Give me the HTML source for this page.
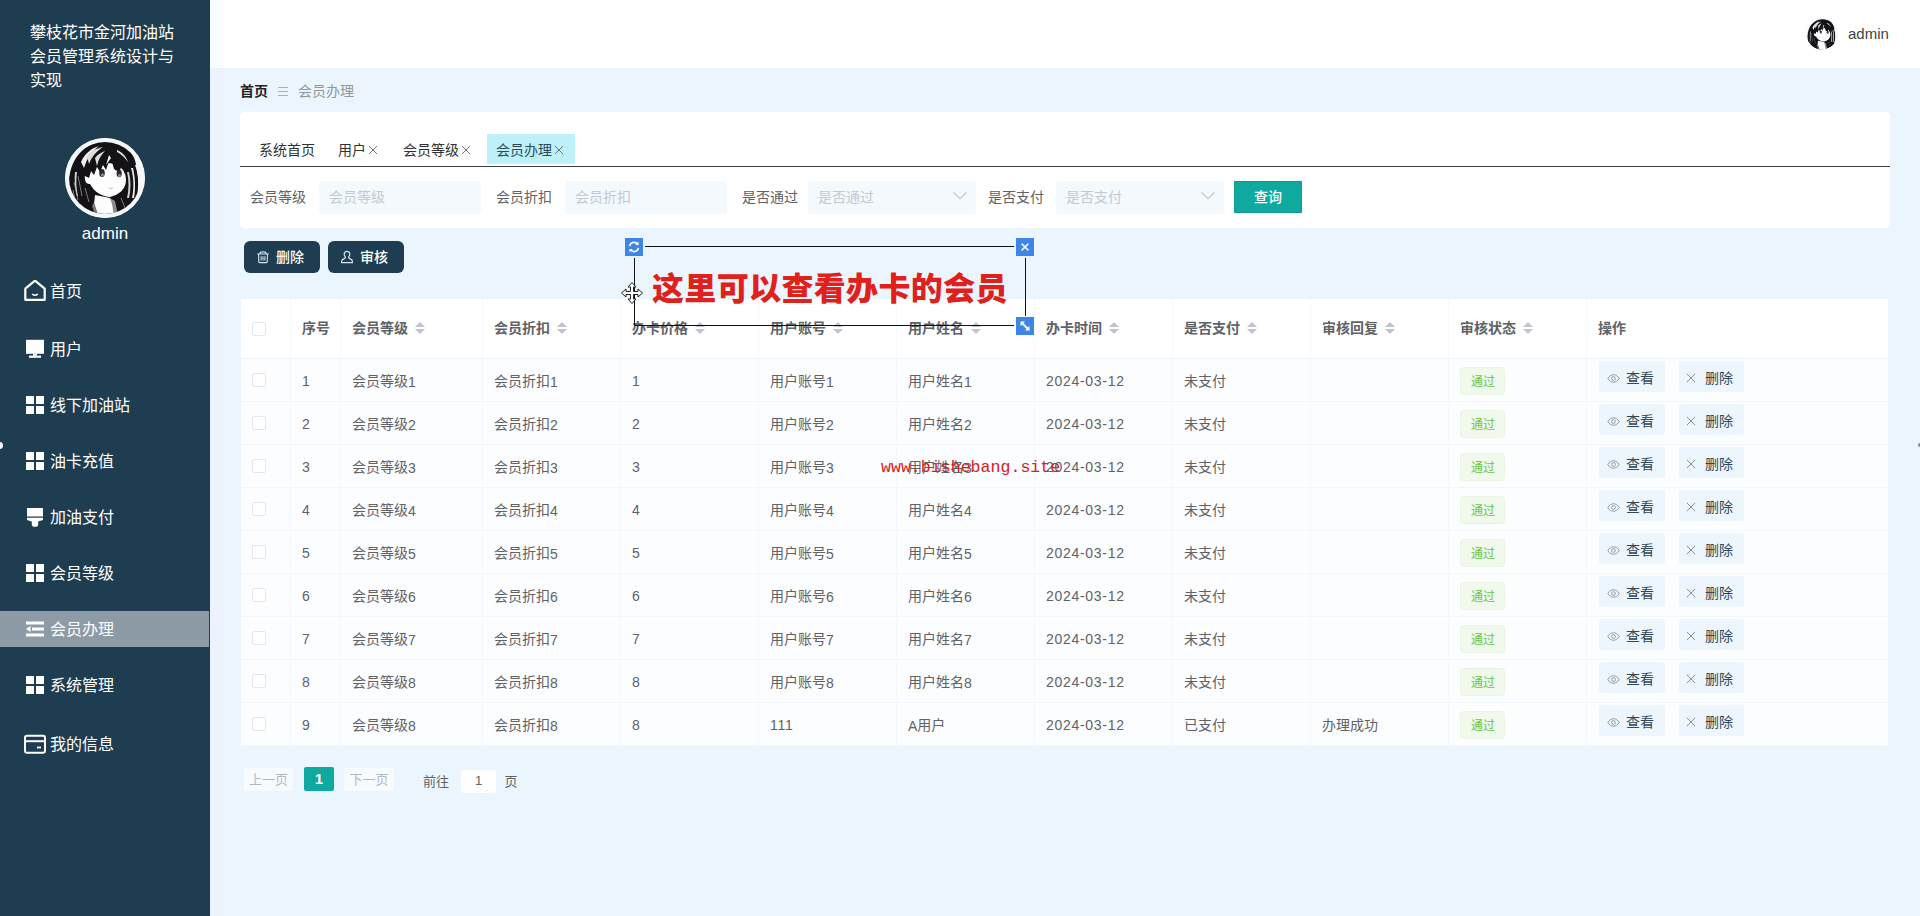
<!DOCTYPE html>
<html lang="zh-CN">
<head>
<meta charset="utf-8">
<title>攀枝花市金河加油站会员管理系统设计与实现</title>
<style>
*{box-sizing:border-box;margin:0;padding:0}
html,body{width:1920px;height:916px;overflow:hidden}
body{position:relative;background:#ebf5fe;font-family:"Liberation Sans","Noto Sans CJK SC",sans-serif;font-size:14px;color:#606266}
i{font-style:normal}
b{font-weight:normal}
.abs{position:absolute}

/* ---------- sidebar ---------- */
#side{position:absolute;left:0;top:0;width:210px;height:916px;background:#1f3d50;color:#fff}
#side h1{position:absolute;left:30px;top:21px;width:150px;font-size:16px;font-weight:normal;line-height:24px;color:#fff}
#side .avatar{position:absolute;left:65px;top:138px;width:80px;height:80px;border-radius:50%;background:#fff;overflow:hidden}
#side .uname{position:absolute;left:0;top:222px;width:210px;text-align:center;font-size:17px;line-height:24px;color:#fff}
#side .mi{position:absolute;left:0;width:209px;height:36px;line-height:38px;font-size:16px;color:#fff;padding-left:50px;white-space:nowrap}
#side .mi.on{background:#8d9ba6}
#side .mi svg{position:absolute;left:24px;top:7px;width:22px;height:22px}

#strip{position:absolute;left:210px;top:0;width:14px;height:916px;background:linear-gradient(#fafdff 0,#fafdff 68px,#ecf3fd 68px,#ecf3fd 100%)}
.edot{position:absolute;border-radius:50%}
/* ---------- header ---------- */
#head{position:absolute;left:224px;top:0;width:1696px;height:68px;background:#fff}
#head .av{position:absolute;left:1582px;top:18px;width:32px;height:32px;border-radius:50%;overflow:hidden}
#head .nm{position:absolute;left:1624px;top:22px;line-height:24px;font-size:15px;color:#444}

/* ---------- breadcrumb ---------- */
#crumb{position:absolute;left:240px;top:79px;height:24px;line-height:24px;font-size:14px;white-space:nowrap}
#crumb .h{font-weight:bold;color:#222}
#crumb .sep{display:inline-block;width:10px;height:9px;margin:0 10px 0 10px;border-top:1px solid #aab0b8;border-bottom:1px solid #aab0b8;position:relative;top:0px}
#crumb .sep:after{content:"";position:absolute;left:0;right:0;top:3px;border-top:1px solid #aab0b8}
#crumb .c{color:#8f969e}

/* ---------- card ---------- */
#card{position:absolute;left:240px;top:112px;width:1650px;height:116px;background:#fff;border-radius:4px}
#tabs{position:absolute;left:0;top:22px;height:30px;white-space:nowrap}
#tabs .t{position:absolute;top:0;height:30px;line-height:32px;font-size:14px;color:#303133;white-space:nowrap}
#tabs .t.on{background:#bdf0f9;color:#2c4a5a}
#tabs .t svg{position:absolute;top:11px;width:10px;height:10px;color:#70757d;margin-left:.5px}
#tabline{position:absolute;left:0;top:54px;width:1650px;height:1px;background:#3a3f45}
.fl{position:absolute;top:69px;height:32px;line-height:32px;font-size:14px;color:#606266;white-space:nowrap}
.fi{position:absolute;top:69px;height:33px;line-height:32px;width:168px;background:#f4f9fe;border-radius:3px;font-size:14px;color:#c3c9d1;padding-left:10px;white-space:nowrap}
.fi svg{position:absolute;right:8px;top:7px;width:16px;height:16px;color:#c0c4cc}
#qbtn{position:absolute;left:994px;top:69px;width:68px;height:32px;line-height:32px;text-align:center;background:#0fa9a0;color:#f2fffe;font-size:14px;font-weight:500;box-shadow:inset 0 0 0 1px rgba(20,120,115,.25)}

/* ---------- action buttons ---------- */
.abtn{position:absolute;top:241px;width:76px;height:32px;line-height:32px;border-radius:6px;background:#1f3d50;color:#fff;font-size:14px;white-space:nowrap;font-weight:500}
.abtn svg{position:absolute;top:9px;width:14px;height:14px}
.abtn b{position:absolute;top:0;font-weight:500}

/* ---------- table ---------- */
#tbl{position:absolute;left:241px;top:299px;width:1647px;border-collapse:separate;border-spacing:0;table-layout:fixed;background:#fff;font-size:14px;color:#606266}
#tbl th,#tbl td{border-right:1px solid #f5f8fc;border-bottom:1px solid #f2f5fa;text-align:left;padding:0 0 0 11px;white-space:nowrap;overflow:hidden;vertical-align:middle}
#tbl .c-chk{padding-left:11px}
#tbl th{height:60px;font-weight:bold;color:#5f6367;background:#fff;padding-bottom:3px}
#tbl td{height:43px;background:#fcfdff;padding-top:1px;letter-spacing:0}
#tbl th:last-child,#tbl td:last-child{border-right:0}
#tbl .chk{display:block;width:14px;height:14px;border:1px solid #e3e7ee;border-radius:2px;background:#fff;position:relative;top:2px}
#tbl td .chk{top:-1px}
#tbl .z{position:relative;top:-1px}
#tbl td.d{letter-spacing:.7px}
.caret{display:inline-block;position:relative;width:10px;height:14px;margin-left:7px;vertical-align:-3px}
.caret i{position:absolute;left:0;width:0;height:0;border-left:5px solid transparent;border-right:5px solid transparent}
.caret .up{top:0px;border-bottom:5px solid #c0c4cc}
.caret .dn{top:7px;border-top:5px solid #c0c4cc}
.tag{display:inline-block;width:45px;height:28px;line-height:29px;text-align:center;font-size:12px;color:#6fc444;background:#f1f9ec;border:1px solid #e9f5e2;border-radius:4px;vertical-align:middle;text-indent:1px;position:relative;top:0}
#tbl td.ops{position:relative;padding:0}
.op{position:absolute;top:2px;height:31px;width:66px;line-height:34px;background:#edf6fd;border-radius:3px;font-size:14px;color:#2f4756;white-space:nowrap}
.op .ic{position:absolute;color:#7f8790}
.op b{position:absolute;top:0;left:27px}
.op1{left:12px}
.op2{left:92px;width:65px}
.op2 b{left:26px}
.op .eye{left:8px;top:11px}
.op .xic{left:7px;top:12px}

/* ---------- pagination ---------- */
#pg{position:absolute;left:240px;top:767px;height:26px;font-size:13px;color:#606266;white-space:nowrap}
#pg span{position:absolute;top:0;height:24px;line-height:25px;text-align:center}
#pg .pb{background:#f8fbfe;color:#b4b9c1;border-radius:2px;top:1px;height:23px;line-height:23px}
#pg .cur{background:#0fa9a0;color:#fff;border-radius:2px;font-weight:bold;line-height:23px;font-size:15px}
#pg .in{background:#fff;border-radius:3px;color:#606266;top:3px;height:23px;line-height:22px}
#pg .tx{top:2px;line-height:26px}

/* ---------- annotation ---------- */
#note{position:absolute;left:634px;top:246px;width:392px;height:80px}
#note i{position:absolute;background:#111;display:block}
#note .tx{position:absolute;left:18px;top:21px;line-height:44px;font-size:32px;font-weight:900;color:#e0211b;white-space:nowrap;font-family:"Liberation Sans","Noto Sans CJK SC",sans-serif;letter-spacing:.35px}
.hd{position:absolute;width:18px;height:18px;background:#3e86e6}
.hd svg{position:absolute;left:0;top:0;width:18px;height:18px}
#wm{position:absolute;left:881px;top:457px;line-height:22px;font-family:"Liberation Mono",monospace;font-size:16.6px;color:#d8201c;white-space:nowrap}
</style>
</head>
<body>

<div id="side">
  <h1>攀枝花市金河加油站会员管理系统设计与实现</h1>
  <div class="avatar"><svg width="80" height="80" viewBox="0 0 80 80"><clipPath id="avc80"><circle cx="40" cy="40" r="36"/></clipPath><circle cx="40" cy="40" r="40" fill="#f4f8fb"/><g clip-path="url(#avc80)"><rect width="80" height="80" fill="#fbfbfb"/><path d="M5 58 C-1 28 16 3 42 3 C58 3 68 12 71 26 C74 40 74 54 70 66 L64 72 L52 76 L34 80 L16 74 Z" fill="#141216"/><path d="M70 27 C74 38 75 52 71 64 L80 64 L80 24 Z" fill="#f6f6f6"/><path d="M66 30 C69 40 69 52 67 60 L69 60 C71 50 70 38 68 30 Z" fill="#e9e9e9"/><path d="M20 41 C19 36 22 34 25 36 C26 28 32 25 41 25 C53 25 61 31 61 42 C61 51 54 57 45 59 C38 59 29 54 25 46 C22 46 20 44 20 41 Z" fill="#fdfdfd"/><path d="M20 38 C18 22 28 9 44 8 C56 8 64 16 66 30 L65 40 L62 31 L60 36 L57 27 L55 32 L52 33 L49 31 L46 20 L43 26 L41 32 L38 27 L35 34 L32 29 L29 37 L26 33 L24 40 Z" fill="#141216"/><path d="M16 24 C20 15 27 10 34 8 C27 13 22 20 19 30 Z" fill="#efefef"/><path d="M44 17 L41 27 L46 20 Z" fill="#f3f3f3"/><ellipse cx="37" cy="35" rx="2.8" ry="4" fill="#2a272c"/><ellipse cx="54.2" cy="35.5" rx="2.6" ry="3.8" fill="#2a272c"/><ellipse cx="37.4" cy="37" rx="1.6" ry="1.8" fill="#8a868c"/><ellipse cx="54.4" cy="37.4" rx="1.5" ry="1.7" fill="#8a868c"/><path d="M44 50 Q46 51 48 50" stroke="#999" stroke-width=".6" fill="none"/><path d="M30 57 L45 60 L49 66 L51 78 L34 80 L29 66 Z" fill="#fcfcfc"/><path d="M45 60 L50 63 L53 77 L49 78 L47 66 Z" fill="#8d8a8c"/><path d="M29 64 L34 80 L31 80 L27 68 Z" fill="#7a7779"/><path d="M9 44 L13 62 M13 38 L17 58 M8 52 L11 66 M20 50 L24 64 M56 60 L60 70" stroke="#8a878c" stroke-width=".9" fill="none"/><path d="M22 18 C26 13 32 10 38 9 C32 13 27 18 24 26 Z M30 20 C33 16 37 14 40 13 C36 17 33 22 32 28 Z M52 12 C57 14 61 18 63 24 C60 20 56 16 52 14 Z" fill="#dcdcdc"/><path d="M62 34 C64 42 64 52 62 60 L64 60 C66 52 66 42 64 34 Z M10 34 C9 42 10 50 12 58 L13 58 C11 50 11 42 12 34 Z" fill="#cfcfcf"/></g></svg></div>
  <div class="uname">admin</div>

  <div class="mi" style="top:273px"><svg viewBox="0 0 22 22"><path d="M1.3 8.6 L11 0.6 L20.7 8.6 V19.8 H1.3 Z" fill="none" stroke="#fff" stroke-width="2.2" stroke-linejoin="round"/><path d="M8.6 14.4 Q11 16.2 13.4 14.4" fill="none" stroke="#fff" stroke-width="1.6" stroke-linecap="round"/></svg>首页</div>
  <div class="mi" style="top:331px"><svg viewBox="0 0 22 22"><rect x="2" y="1.8" width="18" height="14" fill="#fff"/><rect x="9" y="15.8" width="4" height="2" fill="#fff"/><rect x="5" y="17.6" width="12" height="2.2" fill="#fff"/></svg>用户</div>
  <div class="mi" style="top:387px"><svg viewBox="0 0 22 22"><rect x="2" y="2" width="8" height="8" fill="#fff"/><rect x="12" y="2" width="8" height="8" fill="#fff"/><rect x="2" y="12" width="8" height="8" fill="#fff"/><rect x="12" y="12" width="8" height="8" fill="#fff"/></svg>线下加油站</div>
  <div class="mi" style="top:443px"><svg viewBox="0 0 22 22"><rect x="2" y="2" width="8" height="8" fill="#fff"/><rect x="12" y="2" width="8" height="8" fill="#fff"/><rect x="2" y="12" width="8" height="8" fill="#fff"/><rect x="12" y="12" width="8" height="8" fill="#fff"/></svg>油卡充值</div>
  <div class="mi" style="top:499px"><svg viewBox="0 0 22 22"><path d="M3 2 H19 V10.6 H3 Z M3 11.8 H19 V14 L14.2 15.6 V18.4 Q14.2 20.8 11 20.8 Q7.8 20.8 7.8 18.4 V15.6 L3 14 Z" fill="#fff"/></svg>加油支付</div>
  <div class="mi" style="top:555px"><svg viewBox="0 0 22 22"><rect x="2" y="2" width="8" height="8" fill="#fff"/><rect x="12" y="2" width="8" height="8" fill="#fff"/><rect x="2" y="12" width="8" height="8" fill="#fff"/><rect x="12" y="12" width="8" height="8" fill="#fff"/></svg>会员等级</div>
  <div class="mi on" style="top:611px"><svg viewBox="0 0 22 22"><rect x="2" y="3.5" width="18" height="3" fill="#fff"/><rect x="8" y="9.5" width="12" height="3" fill="#fff"/><rect x="2" y="15.5" width="18" height="3" fill="#fff"/><path d="M2 11 L6.5 8 V14 Z" fill="#fff"/></svg>会员办理</div>
  <div class="mi" style="top:667px"><svg viewBox="0 0 22 22"><rect x="2" y="2" width="8" height="8" fill="#fff"/><rect x="12" y="2" width="8" height="8" fill="#fff"/><rect x="2" y="12" width="8" height="8" fill="#fff"/><rect x="12" y="12" width="8" height="8" fill="#fff"/></svg>系统管理</div>
  <div class="mi" style="top:726px"><svg viewBox="0 0 22 22"><rect x="1" y="2.8" width="20" height="17" rx="2" fill="none" stroke="#fff" stroke-width="2"/><rect x="1" y="7.2" width="20" height="2" fill="#fff"/><rect x="13" y="13.6" width="4" height="1.8" fill="#fff"/></svg>我的信息</div>
</div>

<div id="strip"></div>
<div class="edot" style="left:-4px;top:442px;width:7px;height:7px;background:#f2f7fb"></div>
<div class="edot" style="left:1918px;top:443px;width:5px;height:4px;background:#7f8b96"></div>

<div id="head">
  <div class="av"><svg width="32" height="32" viewBox="0 0 80 80"><clipPath id="avc32"><circle cx="40" cy="40" r="39"/></clipPath><circle cx="40" cy="40" r="40" fill="#f4f8fb"/><g clip-path="url(#avc32)"><rect width="80" height="80" fill="#fbfbfb"/><path d="M5 58 C-1 28 16 3 42 3 C58 3 68 12 71 26 C74 40 74 54 70 66 L64 72 L52 76 L34 80 L16 74 Z" fill="#141216"/><path d="M70 27 C74 38 75 52 71 64 L80 64 L80 24 Z" fill="#f6f6f6"/><path d="M66 30 C69 40 69 52 67 60 L69 60 C71 50 70 38 68 30 Z" fill="#e9e9e9"/><path d="M20 41 C19 36 22 34 25 36 C26 28 32 25 41 25 C53 25 61 31 61 42 C61 51 54 57 45 59 C38 59 29 54 25 46 C22 46 20 44 20 41 Z" fill="#fdfdfd"/><path d="M20 38 C18 22 28 9 44 8 C56 8 64 16 66 30 L65 40 L62 31 L60 36 L57 27 L55 32 L52 33 L49 31 L46 20 L43 26 L41 32 L38 27 L35 34 L32 29 L29 37 L26 33 L24 40 Z" fill="#141216"/><path d="M16 24 C20 15 27 10 34 8 C27 13 22 20 19 30 Z" fill="#efefef"/><path d="M44 17 L41 27 L46 20 Z" fill="#f3f3f3"/><ellipse cx="37" cy="35" rx="2.8" ry="4" fill="#2a272c"/><ellipse cx="54.2" cy="35.5" rx="2.6" ry="3.8" fill="#2a272c"/><ellipse cx="37.4" cy="37" rx="1.6" ry="1.8" fill="#8a868c"/><ellipse cx="54.4" cy="37.4" rx="1.5" ry="1.7" fill="#8a868c"/><path d="M44 50 Q46 51 48 50" stroke="#999" stroke-width=".6" fill="none"/><path d="M30 57 L45 60 L49 66 L51 78 L34 80 L29 66 Z" fill="#fcfcfc"/><path d="M45 60 L50 63 L53 77 L49 78 L47 66 Z" fill="#8d8a8c"/><path d="M29 64 L34 80 L31 80 L27 68 Z" fill="#7a7779"/><path d="M9 44 L13 62 M13 38 L17 58 M8 52 L11 66 M20 50 L24 64 M56 60 L60 70" stroke="#8a878c" stroke-width=".9" fill="none"/><path d="M22 18 C26 13 32 10 38 9 C32 13 27 18 24 26 Z M30 20 C33 16 37 14 40 13 C36 17 33 22 32 28 Z M52 12 C57 14 61 18 63 24 C60 20 56 16 52 14 Z" fill="#dcdcdc"/><path d="M62 34 C64 42 64 52 62 60 L64 60 C66 52 66 42 64 34 Z M10 34 C9 42 10 50 12 58 L13 58 C11 50 11 42 12 34 Z" fill="#cfcfcf"/></g></svg></div>
  <div class="nm">admin</div>
</div>

<div id="crumb"><span class="h">首页</span><span class="sep"></span><span class="c">会员办理</span></div>

<div id="card">
  <div id="tabs">
    <span class="t" style="left:10px;width:74px;padding-left:9px">系统首页</span>
    <span class="t" style="left:89px;width:58px;padding-left:9px">用户<svg style="left:38px" viewBox="0 0 10 10"><path d="M1 1 L9 9 M9 1 L1 9" fill="none" stroke="currentColor" stroke-width="1"/></svg></span>
    <span class="t" style="left:154px;width:86px;padding-left:9px">会员等级<svg style="left:66px" viewBox="0 0 10 10"><path d="M1 1 L9 9 M9 1 L1 9" fill="none" stroke="currentColor" stroke-width="1"/></svg></span>
    <span class="t on" style="left:247px;width:88px;padding-left:9px">会员办理<svg style="left:66px" viewBox="0 0 10 10"><path d="M1 1 L9 9 M9 1 L1 9" fill="none" stroke="currentColor" stroke-width="1"/></svg></span>
  </div>
  <div id="tabline"></div>

  <span class="fl" style="left:10px">会员等级</span>
  <span class="fi" style="left:79px;width:162px">会员等级</span>
  <span class="fl" style="left:256px">会员折扣</span>
  <span class="fi" style="left:325px;width:162px">会员折扣</span>
  <span class="fl" style="left:502px">是否通过</span>
  <span class="fi" style="left:568px">是否通过<svg viewBox="0 0 16 16"><path d="M1.6 4.4 L8 10.6 L14.4 4.4" fill="none" stroke="currentColor" stroke-width="1.2"/></svg></span>
  <span class="fl" style="left:748px">是否支付</span>
  <span class="fi" style="left:816px">是否支付<svg viewBox="0 0 16 16"><path d="M1.6 4.4 L8 10.6 L14.4 4.4" fill="none" stroke="currentColor" stroke-width="1.2"/></svg></span>
  <span id="qbtn">查询</span>
</div>

<div class="abtn" style="left:244px"><svg style="left:12px;top:9px" viewBox="0 0 14 14"><path d="M1.2 4 H12.8 M3.6 3.8 C3.8 1.2 10.2 1.2 10.4 3.8 M2.7 4.2 V11.6 Q2.7 12.6 3.7 12.6 H10.3 Q11.3 12.6 11.3 11.6 V4.2 M5.1 6.2 V10.6 M7 6.2 V10.6 M8.9 6.2 V10.6" fill="none" stroke="#d5e4ee" stroke-width="1.1"/></svg><b style="left:32px">删除</b></div>
<div class="abtn" style="left:328px"><svg style="left:12px" viewBox="0 0 14 14"><path d="M7 1.4 C5.2 1.4 4.2 2.7 4.2 4.2 C4.2 5.6 5 6.3 5.4 7.2 C5.6 7.8 5.2 8.2 4.2 8.6 C2.6 9.2 1.6 9.8 1.6 11.2 V12.6 H12.4 V11.2 C12.4 9.8 11.4 9.2 9.8 8.6 C8.8 8.2 8.4 7.8 8.6 7.2 C9 6.3 9.8 5.6 9.8 4.2 C9.8 2.7 8.8 1.4 7 1.4 Z" fill="none" stroke="#d5e4ee" stroke-width="1.2"/></svg><b style="left:32px">审核</b></div>

<table id="tbl">
<colgroup><col style="width:50px"><col style="width:50px"><col style="width:142px"><col style="width:138px"><col style="width:138px"><col style="width:138px"><col style="width:138px"><col style="width:138px"><col style="width:138px"><col style="width:138px"><col style="width:138px"><col style="width:301px"></colgroup>
<thead><tr><th class="c-chk"><span class="chk"></span></th><th>序号</th><th>会员等级<span class="caret"><i class="up"></i><i class="dn"></i></span></th><th>会员折扣<span class="caret"><i class="up"></i><i class="dn"></i></span></th><th>办卡价格<span class="caret"><i class="up"></i><i class="dn"></i></span></th><th>用户账号<span class="caret"><i class="up"></i><i class="dn"></i></span></th><th>用户姓名<span class="caret"><i class="up"></i><i class="dn"></i></span></th><th>办卡时间<span class="caret"><i class="up"></i><i class="dn"></i></span></th><th>是否支付<span class="caret"><i class="up"></i><i class="dn"></i></span></th><th>审核回复<span class="caret"><i class="up"></i><i class="dn"></i></span></th><th>审核状态<span class="caret"><i class="up"></i><i class="dn"></i></span></th><th>操作</th></tr></thead>
<tbody>
<tr>
<td class="c-chk"><span class="chk"></span></td>
<td>1</td><td><span class="z">会员等级</span>1</td><td><span class="z">会员折扣</span>1</td><td class="d">1</td><td><span class="z">用户账号</span>1</td><td><span class="z">用户姓名</span>1</td><td class="d">2024-03-12</td><td><span class="z">未支付</span></td><td></td>
<td><span class="tag">通过</span></td>
<td class="ops"><span class="op op1"><svg class="ic eye" viewBox="0 0 16 16" width="13" height="13"><path d="M1 8 C3 4.6 5.4 3.4 8 3.4 S13 4.6 15 8 C13 11.4 10.6 12.6 8 12.6 S3 11.4 1 8 Z" fill="none" stroke="currentColor" stroke-width="1"/><circle cx="8" cy="8" r="2.3" fill="none" stroke="currentColor" stroke-width="1"/></svg><b>查看</b></span><span class="op op2"><svg class="ic xic" viewBox="0 0 12 12" width="10" height="10"><path d="M1 1 L11 11 M11 1 L1 11" fill="none" stroke="currentColor" stroke-width="1.1"/></svg><b>删除</b></span></td>
</tr>
<tr>
<td class="c-chk"><span class="chk"></span></td>
<td>2</td><td><span class="z">会员等级</span>2</td><td><span class="z">会员折扣</span>2</td><td class="d">2</td><td><span class="z">用户账号</span>2</td><td><span class="z">用户姓名</span>2</td><td class="d">2024-03-12</td><td><span class="z">未支付</span></td><td></td>
<td><span class="tag">通过</span></td>
<td class="ops"><span class="op op1"><svg class="ic eye" viewBox="0 0 16 16" width="13" height="13"><path d="M1 8 C3 4.6 5.4 3.4 8 3.4 S13 4.6 15 8 C13 11.4 10.6 12.6 8 12.6 S3 11.4 1 8 Z" fill="none" stroke="currentColor" stroke-width="1"/><circle cx="8" cy="8" r="2.3" fill="none" stroke="currentColor" stroke-width="1"/></svg><b>查看</b></span><span class="op op2"><svg class="ic xic" viewBox="0 0 12 12" width="10" height="10"><path d="M1 1 L11 11 M11 1 L1 11" fill="none" stroke="currentColor" stroke-width="1.1"/></svg><b>删除</b></span></td>
</tr>
<tr>
<td class="c-chk"><span class="chk"></span></td>
<td>3</td><td><span class="z">会员等级</span>3</td><td><span class="z">会员折扣</span>3</td><td class="d">3</td><td><span class="z">用户账号</span>3</td><td><span class="z">用户姓名</span>3</td><td class="d">2024-03-12</td><td><span class="z">未支付</span></td><td></td>
<td><span class="tag">通过</span></td>
<td class="ops"><span class="op op1"><svg class="ic eye" viewBox="0 0 16 16" width="13" height="13"><path d="M1 8 C3 4.6 5.4 3.4 8 3.4 S13 4.6 15 8 C13 11.4 10.6 12.6 8 12.6 S3 11.4 1 8 Z" fill="none" stroke="currentColor" stroke-width="1"/><circle cx="8" cy="8" r="2.3" fill="none" stroke="currentColor" stroke-width="1"/></svg><b>查看</b></span><span class="op op2"><svg class="ic xic" viewBox="0 0 12 12" width="10" height="10"><path d="M1 1 L11 11 M11 1 L1 11" fill="none" stroke="currentColor" stroke-width="1.1"/></svg><b>删除</b></span></td>
</tr>
<tr>
<td class="c-chk"><span class="chk"></span></td>
<td>4</td><td><span class="z">会员等级</span>4</td><td><span class="z">会员折扣</span>4</td><td class="d">4</td><td><span class="z">用户账号</span>4</td><td><span class="z">用户姓名</span>4</td><td class="d">2024-03-12</td><td><span class="z">未支付</span></td><td></td>
<td><span class="tag">通过</span></td>
<td class="ops"><span class="op op1"><svg class="ic eye" viewBox="0 0 16 16" width="13" height="13"><path d="M1 8 C3 4.6 5.4 3.4 8 3.4 S13 4.6 15 8 C13 11.4 10.6 12.6 8 12.6 S3 11.4 1 8 Z" fill="none" stroke="currentColor" stroke-width="1"/><circle cx="8" cy="8" r="2.3" fill="none" stroke="currentColor" stroke-width="1"/></svg><b>查看</b></span><span class="op op2"><svg class="ic xic" viewBox="0 0 12 12" width="10" height="10"><path d="M1 1 L11 11 M11 1 L1 11" fill="none" stroke="currentColor" stroke-width="1.1"/></svg><b>删除</b></span></td>
</tr>
<tr>
<td class="c-chk"><span class="chk"></span></td>
<td>5</td><td><span class="z">会员等级</span>5</td><td><span class="z">会员折扣</span>5</td><td class="d">5</td><td><span class="z">用户账号</span>5</td><td><span class="z">用户姓名</span>5</td><td class="d">2024-03-12</td><td><span class="z">未支付</span></td><td></td>
<td><span class="tag">通过</span></td>
<td class="ops"><span class="op op1"><svg class="ic eye" viewBox="0 0 16 16" width="13" height="13"><path d="M1 8 C3 4.6 5.4 3.4 8 3.4 S13 4.6 15 8 C13 11.4 10.6 12.6 8 12.6 S3 11.4 1 8 Z" fill="none" stroke="currentColor" stroke-width="1"/><circle cx="8" cy="8" r="2.3" fill="none" stroke="currentColor" stroke-width="1"/></svg><b>查看</b></span><span class="op op2"><svg class="ic xic" viewBox="0 0 12 12" width="10" height="10"><path d="M1 1 L11 11 M11 1 L1 11" fill="none" stroke="currentColor" stroke-width="1.1"/></svg><b>删除</b></span></td>
</tr>
<tr>
<td class="c-chk"><span class="chk"></span></td>
<td>6</td><td><span class="z">会员等级</span>6</td><td><span class="z">会员折扣</span>6</td><td class="d">6</td><td><span class="z">用户账号</span>6</td><td><span class="z">用户姓名</span>6</td><td class="d">2024-03-12</td><td><span class="z">未支付</span></td><td></td>
<td><span class="tag">通过</span></td>
<td class="ops"><span class="op op1"><svg class="ic eye" viewBox="0 0 16 16" width="13" height="13"><path d="M1 8 C3 4.6 5.4 3.4 8 3.4 S13 4.6 15 8 C13 11.4 10.6 12.6 8 12.6 S3 11.4 1 8 Z" fill="none" stroke="currentColor" stroke-width="1"/><circle cx="8" cy="8" r="2.3" fill="none" stroke="currentColor" stroke-width="1"/></svg><b>查看</b></span><span class="op op2"><svg class="ic xic" viewBox="0 0 12 12" width="10" height="10"><path d="M1 1 L11 11 M11 1 L1 11" fill="none" stroke="currentColor" stroke-width="1.1"/></svg><b>删除</b></span></td>
</tr>
<tr>
<td class="c-chk"><span class="chk"></span></td>
<td>7</td><td><span class="z">会员等级</span>7</td><td><span class="z">会员折扣</span>7</td><td class="d">7</td><td><span class="z">用户账号</span>7</td><td><span class="z">用户姓名</span>7</td><td class="d">2024-03-12</td><td><span class="z">未支付</span></td><td></td>
<td><span class="tag">通过</span></td>
<td class="ops"><span class="op op1"><svg class="ic eye" viewBox="0 0 16 16" width="13" height="13"><path d="M1 8 C3 4.6 5.4 3.4 8 3.4 S13 4.6 15 8 C13 11.4 10.6 12.6 8 12.6 S3 11.4 1 8 Z" fill="none" stroke="currentColor" stroke-width="1"/><circle cx="8" cy="8" r="2.3" fill="none" stroke="currentColor" stroke-width="1"/></svg><b>查看</b></span><span class="op op2"><svg class="ic xic" viewBox="0 0 12 12" width="10" height="10"><path d="M1 1 L11 11 M11 1 L1 11" fill="none" stroke="currentColor" stroke-width="1.1"/></svg><b>删除</b></span></td>
</tr>
<tr>
<td class="c-chk"><span class="chk"></span></td>
<td>8</td><td><span class="z">会员等级</span>8</td><td><span class="z">会员折扣</span>8</td><td class="d">8</td><td><span class="z">用户账号</span>8</td><td><span class="z">用户姓名</span>8</td><td class="d">2024-03-12</td><td><span class="z">未支付</span></td><td></td>
<td><span class="tag">通过</span></td>
<td class="ops"><span class="op op1"><svg class="ic eye" viewBox="0 0 16 16" width="13" height="13"><path d="M1 8 C3 4.6 5.4 3.4 8 3.4 S13 4.6 15 8 C13 11.4 10.6 12.6 8 12.6 S3 11.4 1 8 Z" fill="none" stroke="currentColor" stroke-width="1"/><circle cx="8" cy="8" r="2.3" fill="none" stroke="currentColor" stroke-width="1"/></svg><b>查看</b></span><span class="op op2"><svg class="ic xic" viewBox="0 0 12 12" width="10" height="10"><path d="M1 1 L11 11 M11 1 L1 11" fill="none" stroke="currentColor" stroke-width="1.1"/></svg><b>删除</b></span></td>
</tr>
<tr>
<td class="c-chk"><span class="chk"></span></td>
<td>9</td><td><span class="z">会员等级</span>8</td><td><span class="z">会员折扣</span>8</td><td class="d">8</td><td class="d">111</td><td>A<span class="z">用户</span></td><td class="d">2024-03-12</td><td><span class="z">已支付</span></td><td><span class="z">办理成功</span></td>
<td><span class="tag">通过</span></td>
<td class="ops"><span class="op op1"><svg class="ic eye" viewBox="0 0 16 16" width="13" height="13"><path d="M1 8 C3 4.6 5.4 3.4 8 3.4 S13 4.6 15 8 C13 11.4 10.6 12.6 8 12.6 S3 11.4 1 8 Z" fill="none" stroke="currentColor" stroke-width="1"/><circle cx="8" cy="8" r="2.3" fill="none" stroke="currentColor" stroke-width="1"/></svg><b>查看</b></span><span class="op op2"><svg class="ic xic" viewBox="0 0 12 12" width="10" height="10"><path d="M1 1 L11 11 M11 1 L1 11" fill="none" stroke="currentColor" stroke-width="1.1"/></svg><b>删除</b></span></td>
</tr>
</tbody>
</table>

<div id="pg">
  <span class="pb" style="left:4px;width:49px">上一页</span>
  <span class="cur" style="left:64px;width:30px">1</span>
  <span class="pb" style="left:104px;width:50px">下一页</span>
  <span class="tx" style="left:182px;width:28px">前往</span>
  <span class="in" style="left:221px;width:35px">1</span>
  <span class="tx" style="left:264px;width:14px">页</span>
</div>

<div id="note"><i style="left:11px;top:0;width:369px;height:1px"></i><i style="left:0;top:12px;width:1px;height:68px"></i><i style="left:0;top:79px;width:380px;height:1px"></i><i style="left:391px;top:12px;width:1px;height:58px"></i><div class="tx">这里可以查看办卡的会员</div></div>
<div class="hd" style="left:625px;top:238px"><svg viewBox="0 0 18 18"><path d="M4.6 8.2 A4.5 4.5 0 0 1 12.6 6.2 M13.4 9.8 A4.5 4.5 0 0 1 5.4 11.8" fill="none" stroke="#fff" stroke-width="1.6"/><path d="M13.6 3.6 V7 H10.2 Z M4.4 14.4 V11 H7.8 Z" fill="#fff"/></svg></div>
<div class="hd" style="left:1016px;top:238px"><svg viewBox="0 0 18 18"><path d="M5.6 5.6 L12.4 12.4 M12.4 5.6 L5.6 12.4" fill="none" stroke="#eef6ff" stroke-width="1.5"/></svg></div>
<div class="hd" style="left:1016px;top:317px"><svg viewBox="0 0 18 18"><path d="M6 6 L12 12" fill="none" stroke="#fff" stroke-width="1.8"/><path d="M4.5 4.5 H9 L4.5 9 Z M13.5 13.5 H9 L13.5 9 Z" fill="#fff"/></svg></div>
<svg class="abs" style="left:620px;top:281px" width="24" height="24" viewBox="0 0 24 24"><path d="M12 1.5 L16 6 H13.5 V10.5 H18 V8 L22.5 12 L18 16 V13.5 H13.5 V18 H16 L12 22.5 L8 18 H10.5 V13.5 H6 V16 L1.5 12 L6 8 V10.5 H10.5 V6 H8 Z" fill="#fff" stroke="#222" stroke-width="1"/></svg>

<div id="wm">www.bishebang.site</div>

</body>
</html>
